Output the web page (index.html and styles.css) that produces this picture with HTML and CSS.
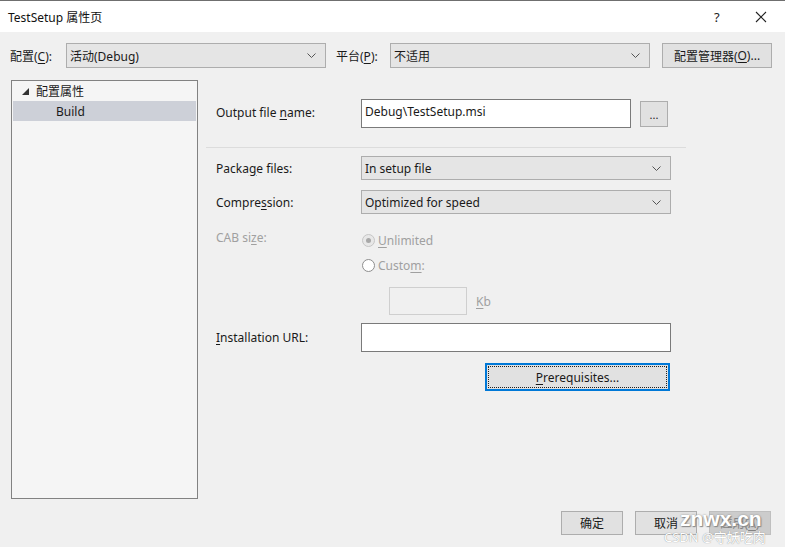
FILE: index.html
```html
<!DOCTYPE html>
<html>
<head>
<meta charset="utf-8">
<link rel="stylesheet" href="styles.css">
</head>
<body>
<div class="window">
  <div class="titlebar">
    <span class="title">TestSetup 属性页</span>
    <span class="help">?</span>
    <span class="close"><svg width="12" height="12" viewBox="0 0 12 12"><path d="M1 1L11 11M11 1L1 11" stroke="#222" stroke-width="1.1"/></svg></span>
  </div>
  <div class="toolbar">
    <span class="tlabel">配置(<u>C</u>):</span>
    <div class="select cfg"><span>活动(Debug)</span><svg class="chev" width="9" height="5" viewBox="0 0 9 5"><path d="M0.5 0.5L4.5 4.5L8.5 0.5" fill="none" stroke="#555"/></svg></div>
    <span class="tlabel plat">平台(<u>P</u>):</span>
    <div class="select plt"><span>不适用</span><svg class="chev" width="9" height="5" viewBox="0 0 9 5"><path d="M0.5 0.5L4.5 4.5L8.5 0.5" fill="none" stroke="#555"/></svg></div>
    <div class="btn mgr">配置管理器(<u>O</u>)...</div>
  </div>
  <div class="main">
    <div class="tree">
      <div class="node"><svg class="tri" width="7" height="7" viewBox="0 0 7 7"><path d="M7 0L7 7L0 7Z" fill="#333"/></svg>配置属性</div>
      <div class="node sel">Build</div>
    </div>
    <div class="props">
      <div class="row r-out">
        <span class="label">Output file <u>n</u>ame:</span>
        <div class="textbox out">Debug\TestSetup.msi</div>
        <div class="btn dots">...</div>
      </div>
      <div class="sep"></div>
      <div class="row r-pkg">
        <span class="label">Packa<u>g</u>e files:</span>
        <div class="select wide"><span>In setup file</span><svg class="chev" width="9" height="5" viewBox="0 0 9 5"><path d="M0.5 0.5L4.5 4.5L8.5 0.5" fill="none" stroke="#555"/></svg></div>
      </div>
      <div class="row r-cmp">
        <span class="label">Compre<u>s</u>sion:</span>
        <div class="select wide"><span>Optimized for speed</span><svg class="chev" width="9" height="5" viewBox="0 0 9 5"><path d="M0.5 0.5L4.5 4.5L8.5 0.5" fill="none" stroke="#555"/></svg></div>
      </div>
      <div class="row r-cab">
        <span class="label dis">CAB si<u>z</u>e:</span>
        <div class="radios">
          <div class="radio"><span class="dot on"></span><span class="dis"><u>U</u>nlimited</span></div>
          <div class="radio"><span class="dot"></span><span class="dis">Custo<u>m</u>:</span></div>
          <div class="kb"><div class="textbox kbbox"></div><span class="dis"><u>K</u>b</span></div>
        </div>
      </div>
      <div class="row r-url">
        <span class="label"><u>I</u>nstallation URL:</span>
        <div class="textbox url"></div>
      </div>
      <div class="row r-pre">
        <div class="btn prereq"><span class="focus"><u>P</u>rerequisites...</span></div>
      </div>
    </div>
  </div>
  <div class="footer">
    <div class="btn fb">确定</div>
    <div class="btn fb">取消</div>
    <div class="btn fb disabled">应用(<u>A</u>)</div>
  </div>
  <div class="wm1">znwx.cn</div>
  <div class="wm2">CSDN @守妖吃肉</div>
</div>
</body>
</html>
```
FILE: styles.css
```css
* { box-sizing: border-box; }
html, body { margin: 0; padding: 0; }
body {
  width: 785px;
  height: 547px;
  overflow: hidden;
  background: #f0f0f0;
  font-family: "Noto Sans", "Noto Sans CJK SC", sans-serif;
  font-size: 12px;
  color: #1a1a1a;
}
u { text-decoration: underline; text-underline-offset: 2px; }
.window { position: relative; width: 785px; height: 547px; border-top: 1px solid #6f6f6f; }
.titlebar {
  height: 31px;
  background: #fff;
  display: flex;
  align-items: center;
  padding-left: 8px;
}
.title { flex: 1; font-size: 12px; color: #111; }
.help { width: 41px; font-size: 13px; color: #222; }
.close { width: 30px; display: flex; align-items: center; }
.toolbar {
  display: flex;
  align-items: center;
  height: 25px;
  margin-top: 11px;
  padding-left: 10px;
}
.tlabel { width: 56px; }
.plat { width: 54px; margin-left: 10px; }
.select {
  height: 25px;
  background: #e5e5e5;
  border: 1px solid #adadad;
  display: flex;
  align-items: center;
  justify-content: space-between;
  padding: 0 9px 0 3px;
}
.cfg { width: 260px; }
.plt { width: 260px; }
.btn {
  background: #e1e1e1;
  border: 1px solid #adadad;
  display: flex;
  align-items: center;
  justify-content: center;
}
.mgr { width: 110px; height: 25px; margin-left: 12px; }
.main { display: flex; margin-top: 12px; height: 419px; }
.tree {
  width: 187px;
  height: 419px;
  margin-left: 11px;
  border: 1px solid #828282;
  background: #f5f5f5;
  padding: 0 1px;
}
.node { height: 20px; display: flex; align-items: center; padding-left: 9px; }
.tri { margin-right: 7px; margin-top: 1px; }
.node.sel { background: #cdd0d8; padding-left: 43px; }
.props { width: 480px; margin-left: 8px; }
.row { display: flex; align-items: center; }
.label { width: 155px; padding-left: 10px; }
.dis { color: #a0a0a0; }
.textbox { background: #fff; border: 1px solid #7a7a7a; }
.r-out { margin-top: 19px; align-items: flex-start; }
.r-out .label { padding-top: 5px; }
.out { width: 270px; height: 29px; padding: 3px 3px; }
.dots { width: 28px; height: 26px; margin-left: 9px; margin-top: 2px; font-size: 11px; }
.sep { height: 1px; background: #dcdcdc; margin: 19px 0 8px 0; width: 480px; }
.wide { width: 310px; height: 24px; }
.r-cmp { margin-top: 10px; }
.r-cab { margin-top: 15px; align-items: flex-start; }
.r-cab .label { padding-top: 0; }
.radios { display: flex; flex-direction: column; }
.radio { display: flex; align-items: center; height: 20px; }
.radio:first-child { margin-top: 1px; }
.radio + .radio { margin-top: 5px; }
.dot {
  width: 13px; height: 13px; border-radius: 50%;
  border: 1px solid #8e8e8e; background: #fff;
  margin-right: 3px; position: relative; margin-left: 1px;
}
.dot.on { border-color: #c6c6c6; background: #e8e8e8; }
.dot.on::after {
  content: ""; position: absolute; left: 3px; top: 3px; width: 5px; height: 5px;
  border-radius: 50%; background: #a8a8a8;
}
.kb { display: flex; align-items: center; margin-left: 28px; margin-top: 12px; }
.kbbox { width: 78px; height: 28px; border-color: #cfcfcf; background: #f0f0f0; margin-right: 9px; }
.r-url { margin-top: 8px; }
.url { width: 310px; height: 29px; }
.r-pre { margin-top: 11px; padding-left: 279px; }
.prereq {
  width: 185px; height: 28px; border: 2px solid #0078d7; background: #e1e1e1; padding: 1px;
}
.focus {
  width: 100%; height: 100%; border: 1px dotted #222;
  display: flex; align-items: center; justify-content: center;
}
.footer { display: flex; justify-content: flex-end; margin-top: 12px; padding-right: 14px; gap: 12px; }
.fb { width: 62px; height: 24px; }
.disabled { background: #cccccc; border-color: #bfbfbf; color: #838383; }
.wm1 {
  position: absolute; left: 680px; top: 506px; font-size: 21px; font-weight: bold;
  color: #fff; text-shadow: 0 0 2px #888, 1px 1px 1px #888; font-family: "Liberation Sans", sans-serif;
}
.wm2 {
  position: absolute; left: 664px; top: 526px; font-size: 13px; color: #ffffff;
  text-shadow: 0 0 1px #777; font-family: "Noto Sans", "Noto Sans CJK SC", sans-serif;
}
```
